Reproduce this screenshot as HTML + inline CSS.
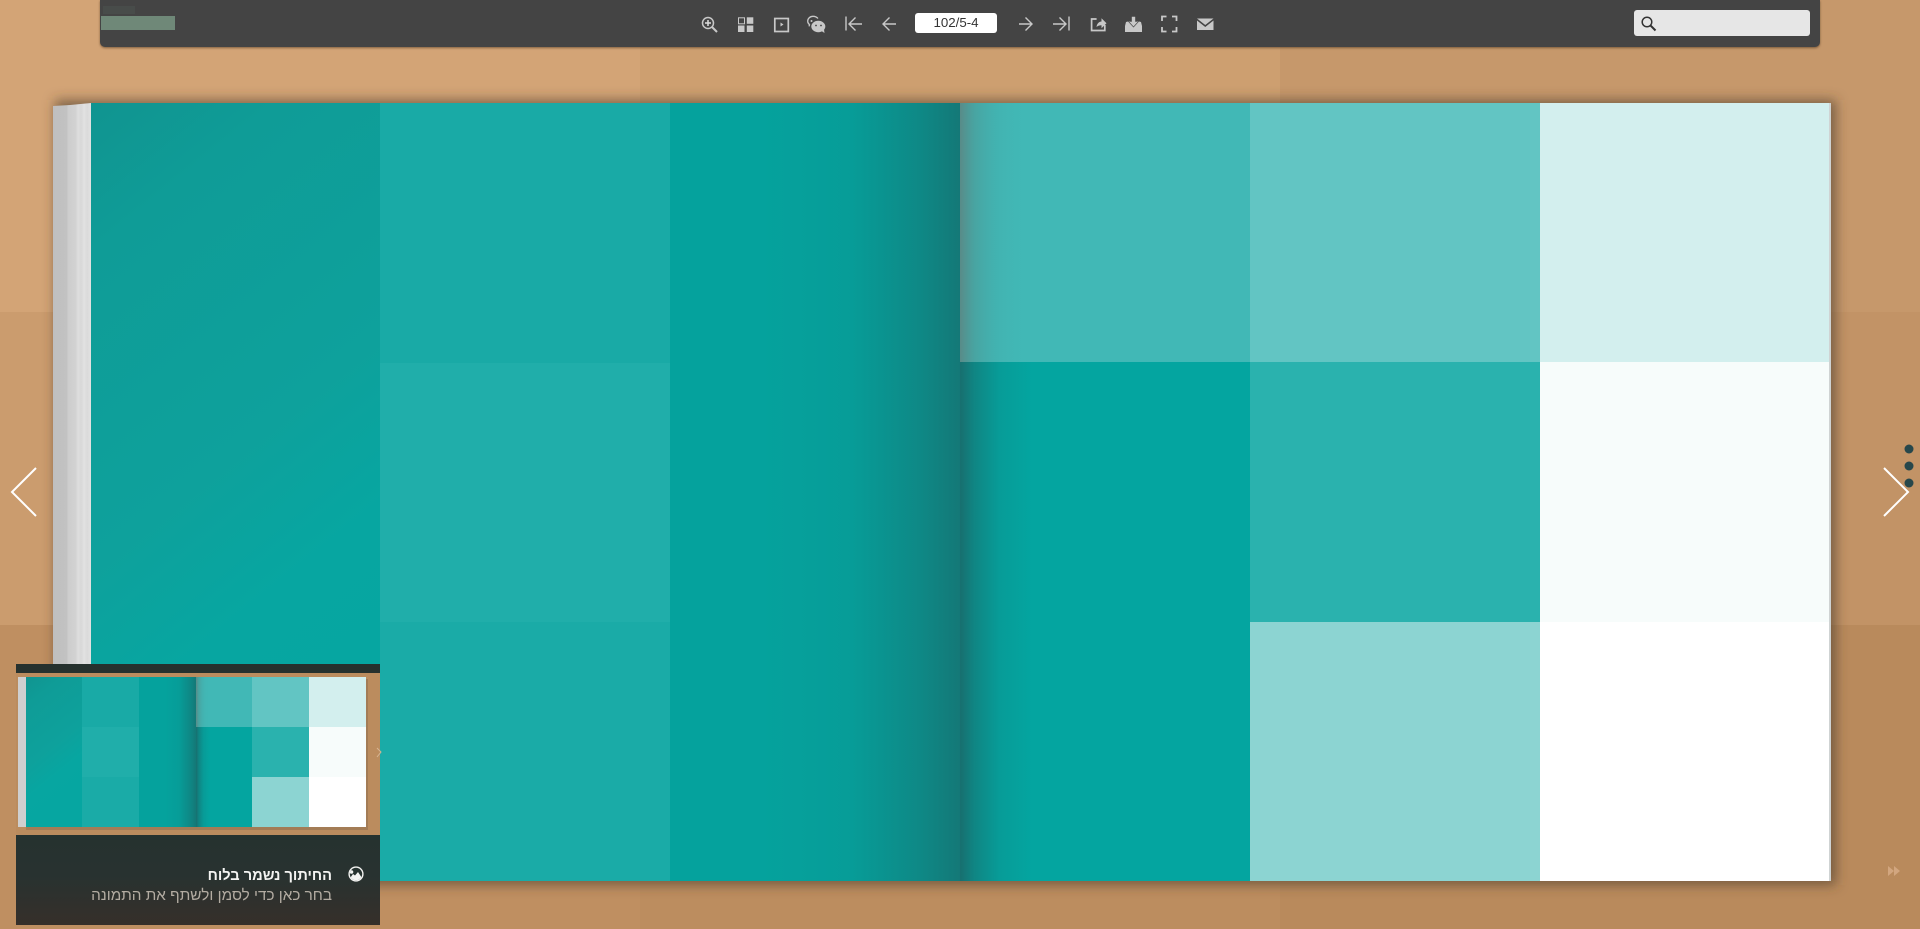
<!DOCTYPE html>
<html lang="he">
<head>
<meta charset="utf-8">
<title>Flipbook</title>
<style>
html,body{margin:0;padding:0;width:1920px;height:929px;overflow:hidden;background:#c49568}
body{position:relative;font-family:"Liberation Sans","Noto Sans CJK JP",sans-serif}
svg{position:absolute;left:0;top:0;display:block}
.box{position:absolute}
#bar{left:100px;top:0;width:1720px;height:47px;background:#444;border-radius:0 0 5px 5px;box-shadow:0 1px 2px rgba(60,40,20,.55)}
#page{left:915px;top:13px;width:82px;height:20px;background:#fff;border-radius:3px;font-size:13.3px;line-height:20px;text-align:center;color:#333}
#search{left:1634px;top:10px;width:176px;height:26px;background:#e6e6e6;border-radius:3px}
#t1,#t2{direction:rtl;text-align:right;white-space:nowrap;right:1588px}
#t1{top:866px;font-size:14.6px;font-weight:bold;line-height:20px;color:#f4f4f2}
#t2{top:886px;font-size:15.3px;line-height:20px;color:#b3aca2}
</style>
</head>
<body>
<svg width="1920" height="929" viewBox="0 0 1920 929" xmlns="http://www.w3.org/2000/svg">
<defs>
<linearGradient id="lshade" x1="0" x2="1" y1="0" y2="0">
<stop offset="0" stop-color="#1d5f60" stop-opacity="0"/>
<stop offset=".45" stop-color="#1d5f60" stop-opacity=".08"/>
<stop offset=".8" stop-color="#1d5f60" stop-opacity=".38"/>
<stop offset="1" stop-color="#1d5f60" stop-opacity=".62"/>
</linearGradient>
<linearGradient id="rshade" x1="0" x2="1" y1="0" y2="0">
<stop offset="0" stop-color="#1f5a5c" stop-opacity=".72"/>
<stop offset=".2" stop-color="#1f5a5c" stop-opacity=".42"/>
<stop offset=".55" stop-color="#1f5a5c" stop-opacity=".12"/>
<stop offset="1" stop-color="#1f5a5c" stop-opacity="0"/>
</linearGradient>
<linearGradient id="rshadeTop" x1="0" x2="1" y1="0" y2="0">
<stop offset="0" stop-color="#5f7f7c" stop-opacity=".8"/>
<stop offset=".2" stop-color="#50908d" stop-opacity=".5"/>
<stop offset=".55" stop-color="#45a3a1" stop-opacity=".2"/>
<stop offset="1" stop-color="#41b8b6" stop-opacity="0"/>
</linearGradient>
<linearGradient id="c1" x1="0" x2=".3" y1="0" y2="1">
<stop offset="0" stop-color="#109490"/>
<stop offset=".18" stop-color="#0f9c97"/>
<stop offset=".55" stop-color="#0ea19c"/>
<stop offset=".75" stop-color="#07a6a1"/>
<stop offset="1" stop-color="#06a6a1"/>
</linearGradient>
<linearGradient id="spine" x1="0" x2="1" y1="0" y2="0">
<stop offset="0" stop-color="#bfbfbf"/>
<stop offset=".36" stop-color="#c2c2c2"/>
<stop offset=".4" stop-color="#cdcdcd"/>
<stop offset=".6" stop-color="#d2d2d2"/>
<stop offset=".66" stop-color="#dedede"/>
<stop offset=".74" stop-color="#d8d8d8"/>
<stop offset=".82" stop-color="#e2e2e2"/>
<stop offset=".9" stop-color="#dadada"/>
<stop offset="1" stop-color="#e2e2e2"/>
</linearGradient>
<linearGradient id="panel" x1="0" x2="0" y1="0" y2="1">
<stop offset="0" stop-color="#26322f"/>
<stop offset=".45" stop-color="#283230"/>
<stop offset="1" stop-color="#362f2a"/>
</linearGradient>
<filter id="bl" x="-5%" y="-5%" width="110%" height="110%"><feGaussianBlur stdDeviation="6"/></filter>
<clipPath id="ic"><circle cx="356" cy="874" r="6.2"/></clipPath>
</defs>

<!-- background tiles -->
<rect x="0" y="0" width="640" height="312" fill="#d3a476"/>
<rect x="640" y="0" width="640" height="312" fill="#cd9f70"/>
<rect x="1280" y="0" width="640" height="312" fill="#c6986b"/>
<rect x="0" y="312" width="640" height="313" fill="#cb9c6e"/>
<rect x="640" y="312" width="640" height="313" fill="#c7986a"/>
<rect x="1280" y="312" width="640" height="313" fill="#c29366"/>
<rect x="0" y="625" width="640" height="304" fill="#bf8f61"/>
<rect x="640" y="625" width="640" height="304" fill="#bc8d5f"/>
<rect x="1280" y="625" width="640" height="304" fill="#b98a5c"/>

<!-- book shadow -->
<rect x="55" y="100" width="1781" height="785" fill="#4a3a2a" fill-opacity=".62" filter="url(#bl)"/>

<!-- spine / page stack -->
<polygon points="53,106 70,105 91,103 91,881 53,881" fill="url(#spine)"/>

<!-- left page -->
<rect x="91" y="103" width="289" height="778" fill="url(#c1)"/>
<rect x="380" y="103" width="290" height="260" fill="#19aaa6"/>
<rect x="380" y="363" width="290" height="259" fill="#20aeaa"/>
<rect x="380" y="622" width="290" height="259" fill="#1aaba7"/>
<rect x="670" y="103" width="290" height="778" fill="#05a29d"/>
<rect x="760" y="103" width="200" height="778" fill="url(#lshade)"/>

<!-- right page -->
<rect x="960" y="103" width="290" height="259" fill="#41b8b6"/>
<rect x="960" y="362" width="290" height="519" fill="#04a5a0"/>
<rect x="1250" y="103" width="290" height="259" fill="#62c5c3"/>
<rect x="1250" y="362" width="290" height="260" fill="#2ab2ae"/>
<rect x="1250" y="622" width="290" height="259" fill="#8cd4d2"/>
<rect x="1540" y="103" width="291" height="259" fill="#d3efee"/>
<rect x="1540" y="362" width="291" height="260" fill="#f7fcfb"/>
<rect x="1540" y="622" width="291" height="259" fill="#ffffff"/>
<rect x="960" y="103" width="72" height="259" fill="url(#rshadeTop)"/>
<rect x="960" y="362" width="72" height="519" fill="url(#rshade)"/>
<rect x="1829" y="103" width="2" height="778" fill="#cfd3d3"/>

<!-- side arrows -->
<polyline points="36,468 12,492 36,516" fill="none" stroke="#fff" stroke-width="2"/>
<polyline points="1884,468 1908,492 1884,516" fill="none" stroke="#fff" stroke-width="2"/>
<circle cx="1909" cy="449" r="4.5" fill="#27474b"/>
<circle cx="1909" cy="466" r="4.5" fill="#27474b"/>
<circle cx="1909" cy="483" r="4.5" fill="#27474b"/>
<path d="M1888 866l6 5-6 5zM1894 866l6 5-6 5z" fill="#d2a67f"/>

<!-- share panel -->
<rect x="16" y="664" width="364" height="9" fill="#26312e"/>
<rect x="16" y="673" width="364" height="162" fill="#bb8c5e"/>
<rect x="16" y="835" width="364" height="90" fill="url(#panel)"/>
<rect x="26" y="679" width="342" height="151" fill="#8f6f50" fill-opacity=".55"/>
<rect x="18" y="677" width="8" height="150" fill="#cfcfcf"/>
<rect x="26" y="677" width="56" height="150" fill="url(#c1)"/>
<rect x="82" y="677" width="57" height="50" fill="#19aaa6"/>
<rect x="82" y="727" width="57" height="50" fill="#20aeaa"/>
<rect x="82" y="777" width="57" height="50" fill="#1aaba7"/>
<rect x="139" y="677" width="57" height="150" fill="#05a29d"/>
<rect x="165" y="677" width="31" height="150" fill="url(#lshade)"/>
<rect x="196" y="677" width="56" height="50" fill="#41b8b6"/>
<rect x="196" y="727" width="56" height="100" fill="#04a5a0"/>
<rect x="252" y="677" width="57" height="50" fill="#62c5c3"/>
<rect x="252" y="727" width="57" height="50" fill="#2ab2ae"/>
<rect x="252" y="777" width="57" height="50" fill="#8cd4d2"/>
<rect x="309" y="677" width="57" height="50" fill="#d3efee"/>
<rect x="309" y="727" width="57" height="50" fill="#f7fcfb"/>
<rect x="309" y="777" width="57" height="50" fill="#ffffff"/>
<rect x="196" y="677" width="14" height="50" fill="url(#rshadeTop)"/>
<rect x="196" y="727" width="14" height="100" fill="url(#rshade)"/>
<polyline points="377,748 381,752 377,757" fill="none" stroke="#d8b593" stroke-width="1"/>
<circle cx="356" cy="874" r="7.6" fill="#f4f4f2"/>
<circle cx="356" cy="874" r="6.2" fill="#26322f"/>
<g clip-path="url(#ic)">
<path d="M348 881l5-7 2 1.500 3-3.500 6 9v3h-16z" fill="#f4f4f2"/>
<circle cx="351.500" cy="872" r="1.800" fill="#f4f4f2"/>
</g>
</svg>

<div class="box" id="bar"></div>
<div class="box" id="page">102/5-4</div>
<div class="box" id="search"></div>
<div class="box" id="t1">החיתוך נשמר בלוח</div>
<div class="box" id="t2">בחר כאן כדי לסמן ולשתף את התמונה</div>

<svg width="1920" height="47" viewBox="0 0 1920 47" xmlns="http://www.w3.org/2000/svg" style="pointer-events:none">
<!-- logo -->
<rect x="101" y="16" width="74" height="14" fill="#6f8878"/>
<rect x="103" y="6" width="32" height="8" fill="#6f8878" fill-opacity=".12"/>
<!-- zoom -->
<g fill="none" stroke="#c8c8c8" stroke-width="1.5">
<circle cx="708" cy="23" r="5.5"/>
<path d="M712 27l5 5" stroke-width="2"/>
<path d="M705 23h6M708 20v6" stroke="#dedede"/>
</g>
<!-- thumbnails -->
<g fill="#c8c8c8">
<rect x="738.500" y="17.800" width="6" height="6" fill="none" stroke="#c8c8c8"/>
<rect x="746.800" y="17.300" width="6.500" height="6.500"/>
<rect x="738" y="25.500" width="6.500" height="6.500"/>
<rect x="746.800" y="25.500" width="6.500" height="6.500"/>
</g>
<!-- play -->
<rect x="774.800" y="18.500" width="13.500" height="13" fill="none" stroke="#c8c8c8" stroke-width="1.700"/>
<path d="M780.500 22.500l3 2-3 2z" fill="#c8c8c8"/>
<!-- wechat -->
<path d="M818 18.500c-1.200-1.400-3-2.200-5-2.200-3 0-5.300 2.200-5.300 4.800 0 1.400.7 2.600 1.800 3.500l-.4 1.800" fill="none" stroke="#c8c8c8" stroke-width="1.300"/>
<ellipse cx="818.300" cy="26.500" rx="7" ry="5.700" fill="#c8c8c8"/>
<path d="M821.500 31l3 2-.5-3.500z" fill="#c8c8c8"/>
<circle cx="811.500" cy="21" r="1" fill="#c8c8c8"/>
<circle cx="816" cy="25.500" r=".9" fill="#444"/>
<circle cx="821" cy="25.500" r=".9" fill="#444"/>
<!-- first / prev -->
<g fill="none" stroke="#c8c8c8" stroke-width="1.400">
<path d="M846 16.500v14"/>
<path d="M862 24h-13M855.500 17.500l-6.500 6.500 6.500 6.500"/>
<path d="M896 24h-13M889.500 17.500l-6.500 6.500 6.500 6.500"/>
<!-- next / last -->
<path d="M1019 24h13M1025.500 17.500l6.500 6.500-6.500 6.500"/>
<path d="M1053 24h13M1059.500 17.500l6.500 6.500-6.500 6.500"/>
<path d="M1069 16.500v14"/>
<!-- share -->
<path d="M1104.800 25v5.500h-13.200v-11.500h5" stroke-width="1.700"/>
</g>
<path d="M1096.500 27c.5-3.500 2.500-5.500 5-5.500v-3.300l5 5-5 5v-3c-2 0-3.700.5-5 1.800z" fill="#c8c8c8"/>
<!-- download -->
<path d="M1125 26l1-4 4-1 3.500 4 3.500-4 4 1 1 4v6h-17z" fill="#c8c8c8"/>
<path d="M1131.500 16.500h4v5h3l-5 5.500-5-5.500h3z" fill="#c8c8c8" stroke="#444" stroke-width=".6"/>
<!-- fullscreen -->
<path d="M1162 21v-4.500h4.500M1172 16.500h4.500V21M1176.500 27v4.500H1172M1166.500 31.500H1162V27" fill="none" stroke="#c8c8c8" stroke-width="1.800"/>
<!-- mail -->
<path d="M1197 18.500h16.500l-8.250 6.500z" fill="#c8c8c8"/>
<path d="M1197 20.500v9.500h16.500v-9.500l-8.250 6.500z" fill="#c8c8c8"/>
<!-- search icon -->
<circle cx="1647" cy="22" r="4.800" fill="none" stroke="#333" stroke-width="1.500"/>
<path d="M1650.500 25.500l5 5" stroke="#333" stroke-width="2" fill="none"/>
</svg>
</body>
</html>
